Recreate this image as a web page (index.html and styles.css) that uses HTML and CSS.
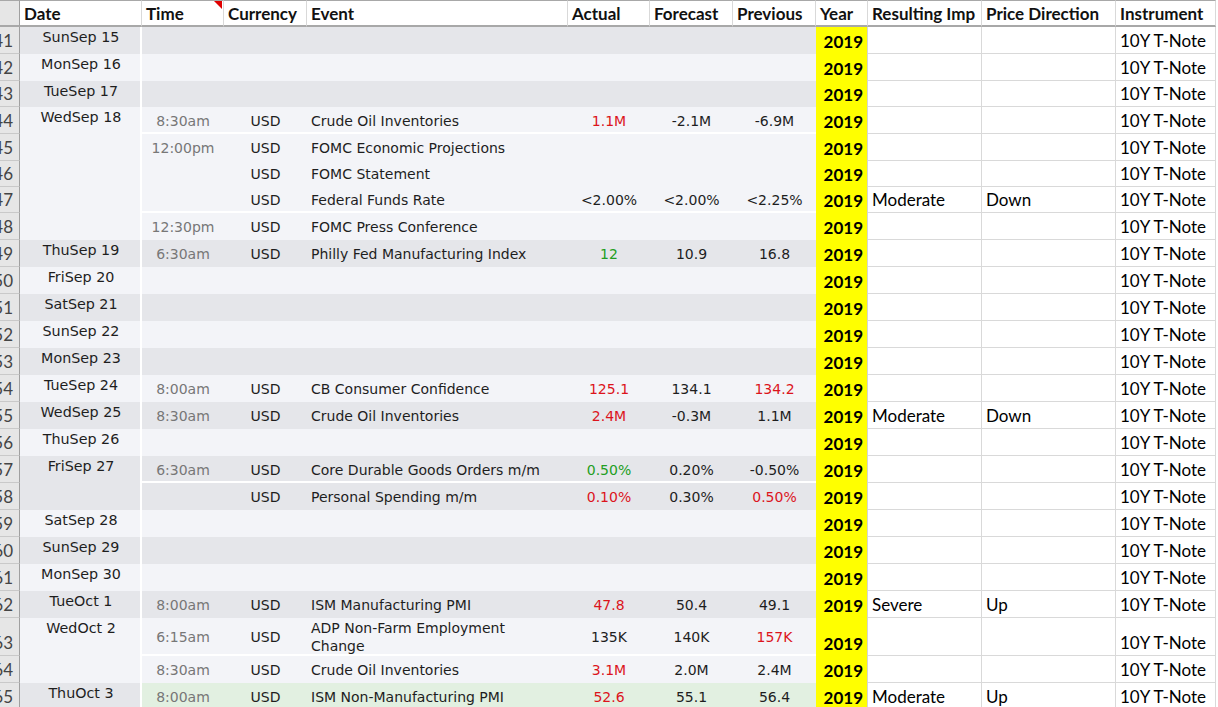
FILE: index.html
```html
<!DOCTYPE html>
<html>
<head>
<meta charset="utf-8">
<link rel="stylesheet" href="styles.css">
</head>
<body>
<div class="sheet">
  <div class="hd corner"></div>
  <div class="hd">Date</div>
  <div class="hd">Time<span class="tri"></span></div>
  <div class="hd">Currency</div>
  <div class="hd">Event</div>
  <div class="hd">Actual</div>
  <div class="hd">Forecast</div>
  <div class="hd">Previous</div>
  <div class="hd">Year</div>
  <div class="hd">Resulting Imp</div>
  <div class="hd">Price Direction</div>
  <div class="hd">Instrument</div>

  <!-- 41 -->
  <div class="rn">41</div>
  <div class="date dk">SunSep 15</div>
  <div class="blank dk"></div>
  <div class="yr">2019</div><div class="xl"></div><div class="xl"></div><div class="xl">10Y T-Note</div>
  <!-- 42 -->
  <div class="rn">42</div>
  <div class="date lt">MonSep 16</div>
  <div class="blank lt"></div>
  <div class="yr">2019</div><div class="xl"></div><div class="xl"></div><div class="xl">10Y T-Note</div>
  <!-- 43 -->
  <div class="rn">43</div>
  <div class="date dk">TueSep 17</div>
  <div class="blank dk"></div>
  <div class="yr">2019</div><div class="xl"></div><div class="xl"></div><div class="xl">10Y T-Note</div>
  <!-- 44 -->
  <div class="rn">44</div>
  <div class="date lt span5">WedSep 18</div>
  <div class="c lt sep time">8:30am</div><div class="c lt sep">USD</div><div class="c lt sep ev">Crude Oil Inventories</div>
  <div class="c lt sep red">1.1M</div><div class="c lt sep">-2.1M</div><div class="c lt sep">-6.9M</div>
  <div class="yr">2019</div><div class="xl"></div><div class="xl"></div><div class="xl">10Y T-Note</div>
  <!-- 45 -->
  <div class="rn">45</div>
  <div class="c lt time">12:00pm</div><div class="c lt">USD</div><div class="c lt ev">FOMC Economic Projections</div>
  <div class="c lt"></div><div class="c lt"></div><div class="c lt"></div>
  <div class="yr">2019</div><div class="xl"></div><div class="xl"></div><div class="xl">10Y T-Note</div>
  <!-- 46 -->
  <div class="rn">46</div>
  <div class="c lt time"></div><div class="c lt">USD</div><div class="c lt ev">FOMC Statement</div>
  <div class="c lt"></div><div class="c lt"></div><div class="c lt"></div>
  <div class="yr">2019</div><div class="xl"></div><div class="xl"></div><div class="xl">10Y T-Note</div>
  <!-- 47 -->
  <div class="rn">47</div>
  <div class="c lt sep time"></div><div class="c lt sep">USD</div><div class="c lt sep ev">Federal Funds Rate</div>
  <div class="c lt sep">&lt;2.00%</div><div class="c lt sep">&lt;2.00%</div><div class="c lt sep">&lt;2.25%</div>
  <div class="yr">2019</div><div class="xl">Moderate</div><div class="xl">Down</div><div class="xl">10Y T-Note</div>
  <!-- 48 -->
  <div class="rn">48</div>
  <div class="c lt time">12:30pm</div><div class="c lt">USD</div><div class="c lt ev">FOMC Press Conference</div>
  <div class="c lt"></div><div class="c lt"></div><div class="c lt"></div>
  <div class="yr">2019</div><div class="xl"></div><div class="xl"></div><div class="xl">10Y T-Note</div>
  <!-- 49 -->
  <div class="rn">49</div>
  <div class="date dk">ThuSep 19</div>
  <div class="c dk time">6:30am</div><div class="c dk">USD</div><div class="c dk ev">Philly Fed Manufacturing Index</div>
  <div class="c dk green">12</div><div class="c dk">10.9</div><div class="c dk">16.8</div>
  <div class="yr">2019</div><div class="xl"></div><div class="xl"></div><div class="xl">10Y T-Note</div>
  <!-- 50 -->
  <div class="rn">50</div>
  <div class="date lt">FriSep 20</div>
  <div class="blank lt"></div>
  <div class="yr">2019</div><div class="xl"></div><div class="xl"></div><div class="xl">10Y T-Note</div>
  <!-- 51 -->
  <div class="rn">51</div>
  <div class="date dk">SatSep 21</div>
  <div class="blank dk"></div>
  <div class="yr">2019</div><div class="xl"></div><div class="xl"></div><div class="xl">10Y T-Note</div>
  <!-- 52 -->
  <div class="rn">52</div>
  <div class="date lt">SunSep 22</div>
  <div class="blank lt"></div>
  <div class="yr">2019</div><div class="xl"></div><div class="xl"></div><div class="xl">10Y T-Note</div>
  <!-- 53 -->
  <div class="rn">53</div>
  <div class="date dk">MonSep 23</div>
  <div class="blank dk"></div>
  <div class="yr">2019</div><div class="xl"></div><div class="xl"></div><div class="xl">10Y T-Note</div>
  <!-- 54 -->
  <div class="rn">54</div>
  <div class="date lt">TueSep 24</div>
  <div class="c lt time">8:00am</div><div class="c lt">USD</div><div class="c lt ev">CB Consumer Confidence</div>
  <div class="c lt red">125.1</div><div class="c lt">134.1</div><div class="c lt red">134.2</div>
  <div class="yr">2019</div><div class="xl"></div><div class="xl"></div><div class="xl">10Y T-Note</div>
  <!-- 55 -->
  <div class="rn">55</div>
  <div class="date dk">WedSep 25</div>
  <div class="c dk time">8:30am</div><div class="c dk">USD</div><div class="c dk ev">Crude Oil Inventories</div>
  <div class="c dk red">2.4M</div><div class="c dk">-0.3M</div><div class="c dk">1.1M</div>
  <div class="yr">2019</div><div class="xl">Moderate</div><div class="xl">Down</div><div class="xl">10Y T-Note</div>
  <!-- 56 -->
  <div class="rn">56</div>
  <div class="date lt">ThuSep 26</div>
  <div class="blank lt"></div>
  <div class="yr">2019</div><div class="xl"></div><div class="xl"></div><div class="xl">10Y T-Note</div>
  <!-- 57 -->
  <div class="rn">57</div>
  <div class="date dk span2">FriSep 27</div>
  <div class="c dk sep time">6:30am</div><div class="c dk sep">USD</div><div class="c dk sep ev">Core Durable Goods Orders m/m</div>
  <div class="c dk sep green">0.50%</div><div class="c dk sep">0.20%</div><div class="c dk sep">-0.50%</div>
  <div class="yr">2019</div><div class="xl"></div><div class="xl"></div><div class="xl">10Y T-Note</div>
  <!-- 58 -->
  <div class="rn">58</div>
  <div class="c dk time"></div><div class="c dk">USD</div><div class="c dk ev">Personal Spending m/m</div>
  <div class="c dk red">0.10%</div><div class="c dk">0.30%</div><div class="c dk red">0.50%</div>
  <div class="yr">2019</div><div class="xl"></div><div class="xl"></div><div class="xl">10Y T-Note</div>
  <!-- 59 -->
  <div class="rn">59</div>
  <div class="date lt">SatSep 28</div>
  <div class="blank lt"></div>
  <div class="yr">2019</div><div class="xl"></div><div class="xl"></div><div class="xl">10Y T-Note</div>
  <!-- 60 -->
  <div class="rn">60</div>
  <div class="date dk">SunSep 29</div>
  <div class="blank dk"></div>
  <div class="yr">2019</div><div class="xl"></div><div class="xl"></div><div class="xl">10Y T-Note</div>
  <!-- 61 -->
  <div class="rn">61</div>
  <div class="date lt">MonSep 30</div>
  <div class="blank lt"></div>
  <div class="yr">2019</div><div class="xl"></div><div class="xl"></div><div class="xl">10Y T-Note</div>
  <!-- 62 -->
  <div class="rn">62</div>
  <div class="date dk">TueOct 1</div>
  <div class="c dk time">8:00am</div><div class="c dk">USD</div><div class="c dk ev">ISM Manufacturing PMI</div>
  <div class="c dk red">47.8</div><div class="c dk">50.4</div><div class="c dk">49.1</div>
  <div class="yr">2019</div><div class="xl">Severe</div><div class="xl">Up</div><div class="xl">10Y T-Note</div>
  <!-- 63 -->
  <div class="rn">63</div>
  <div class="date lt span2">WedOct 2</div>
  <div class="c lt sep time">6:15am</div><div class="c lt sep">USD</div><div class="c lt sep ev">ADP Non-Farm Employment Change</div>
  <div class="c lt sep">135K</div><div class="c lt sep">140K</div><div class="c lt sep red">157K</div>
  <div class="yr">2019</div><div class="xl"></div><div class="xl"></div><div class="xl">10Y T-Note</div>
  <!-- 64 -->
  <div class="rn">64</div>
  <div class="c lt time">8:30am</div><div class="c lt">USD</div><div class="c lt ev">Crude Oil Inventories</div>
  <div class="c lt red">3.1M</div><div class="c lt">2.0M</div><div class="c lt">2.4M</div>
  <div class="yr">2019</div><div class="xl"></div><div class="xl"></div><div class="xl">10Y T-Note</div>
  <!-- 65 -->
  <div class="rn">65</div>
  <div class="date dk">ThuOct 3</div>
  <div class="c gr time">8:00am</div><div class="c gr">USD</div><div class="c gr ev">ISM Non-Manufacturing PMI</div>
  <div class="c gr red">52.6</div><div class="c gr">55.1</div><div class="c gr">56.4</div>
  <div class="yr">2019</div><div class="xl">Moderate</div><div class="xl">Up</div><div class="xl">10Y T-Note</div>
</div>
</body>
</html>
```
FILE: styles.css
```css
html, body {
  margin: 0;
  padding: 0;
  background: #ffffff;
  overflow: hidden;
}

.sheet {
  display: grid;
  width: 1218px;
  grid-template-columns: 20px 122px 82px 83px 261px 82px 83px 83px 52px 114px 134px 100px;
  grid-template-rows:
    27px
    27px 27px 26px 27px 27px 26px 26px 27px
    repeat(13, 27px)
    27px 38px 27px 27px;
  font-family: "DejaVu Sans", Verdana, sans-serif;
  font-size: 14px;
  color: #1e1e1e;
}

.sheet > div {
  box-sizing: border-box;
  display: flex;
  min-width: 0;
  white-space: nowrap;
  overflow: hidden;
}

/* header row */
.hd {
  position: relative;
  background: #ffffff;
  border-top: 1px solid #a8a8a8;
  border-bottom: 2px solid #a8a8a8;
  border-right: 1px solid #d9d9d9;
  font-family: Lato, "Open Sans", sans-serif;
  font-weight: 700;
  font-size: 17px;
  color: #111;
  align-items: center;
  padding-left: 4px;
}

.hd.corner {
  background: #e6e6e6;
  border-right: 1px solid #a0a0a0;
  padding: 0;
}

.tri {
  position: absolute;
  top: 0;
  right: 1px;
  width: 0;
  height: 0;
  border-top: 8px solid #e00000;
  border-left: 8px solid transparent;
}

/* row numbers */
.rn {
  background: #e6e6e6;
  border-right: 1px solid #a0a0a0;
  border-bottom: 1px solid #c9c9c9;
  font-family: Lato, "Open Sans", sans-serif;
  font-size: 17px;
  color: #444;
  justify-content: flex-end;
  align-items: flex-end;
  padding: 0 6px 2px 0;
}

/* pasted table area */
.dk { background: #e5e6ea; }
.lt { background: #f3f4f8; }
.gr { background: #e2f0e1; }

.date {
  justify-content: center;
  align-items: flex-start;
  padding-top: 2px;
  line-height: 16px;
  font-size: 14.3px;
  box-shadow: inset -2px 0 0 #ffffff;
}

.span5 { grid-row: span 5; }
.span2 { grid-row: span 2; }

.blank { grid-column: span 6; }

.c {
  justify-content: center;
  align-items: center;
}

.c.ev {
  justify-content: flex-start;
  padding: 0 12px 0 4px;
  white-space: normal;
  line-height: 18px;
}

.c.time { color: #777777; }
.red { color: #dc141c; }
.green { color: #229e22; }

.sep { box-shadow: inset 0 -2px 0 #ffffff; }

/* Excel columns */
.yr {
  background: #ffff00;
  border-right: 1px solid #d4d4d4;
  font-family: Lato, "Open Sans", sans-serif;
  font-weight: 700;
  font-size: 17px;
  color: #000;
  justify-content: flex-end;
  align-items: flex-end;
  padding: 0 4px 2px 0;
}

.xl {
  background: #ffffff;
  border-right: 1px solid #d9d9d9;
  border-bottom: 1px solid #d9d9d9;
  font-family: Lato, "Open Sans", sans-serif;
  font-size: 17px;
  color: #000;
  align-items: flex-end;
  padding: 0 0 2px 4px;
}
```
